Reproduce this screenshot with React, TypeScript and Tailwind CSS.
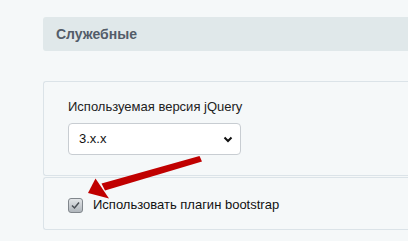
import React from "react";

const Arrow: React.FC = () => (
  <svg
    className="pointer-events-none absolute left-0 top-0"
    width={408}
    height={241}
    viewBox="0 0 408 241"
  >
    <path d="M199.5 156 L202 161.5 L105 190.5 L101.5 183.5 Z" fill="#c00000" />
    <path d="M88 193 L95.5 178.5 L109 198.5 Z" fill="#c00000" />
  </svg>
);

export default function App() {
  return (
    <div className="relative h-[241px] w-[408px] overflow-hidden bg-[#f5f8f9] font-['Liberation_Sans',Arial,sans-serif]">
      <div className="pl-[43px] pt-[17px]">
        <div className="flex h-[34px] items-center rounded-l-[3px] bg-[#e0e8ea] pl-[13px]">
          <span className="text-[14px] font-bold text-[#535c69]">Служебные</span>
        </div>

        <div className="mt-[30px] h-[95px] rounded-l-[3px] border border-r-0 border-[#dbe3e8] pl-[24px] pt-[17px]">
          <div className="text-[13px] leading-[16px] text-[#222]">Используемая версия jQuery</div>
          <div className="mt-[8px] flex h-[32px] w-[173px] items-center justify-between rounded-[4px] border border-[#c8cdd2] bg-white pl-[10px] pr-[6px]">
            <span className="text-[13px] text-[#111]">3.x.x</span>
            <svg width="12" height="12" viewBox="0 0 12 12">
              <path d="M2.5 4.5 L6 8 L9.5 4.5" fill="none" stroke="#111" strokeWidth="2" />
            </svg>
          </div>
        </div>

        <div className="mt-[1px] flex h-[53px] items-center rounded-l-[3px] border border-r-0 border-[#dbe3e8] pl-[24px] pt-[3px]">
          <span className="flex h-[15px] w-[15px] items-center justify-center rounded-[3px] border border-[#80868c] bg-gradient-to-b from-[#e2e5e8] to-[#b0b6bc]">
            <svg width="11" height="11" viewBox="0 0 11 11">
              <path d="M2 5.5 L4.5 8 L9 2.5" fill="none" stroke="#4a4f55" strokeWidth="1.5" />
            </svg>
          </span>
          <span className="ml-[10px] text-[13px] text-[#111]">Использовать плагин bootstrap</span>
        </div>
      </div>
      <Arrow />
    </div>
  );
}
